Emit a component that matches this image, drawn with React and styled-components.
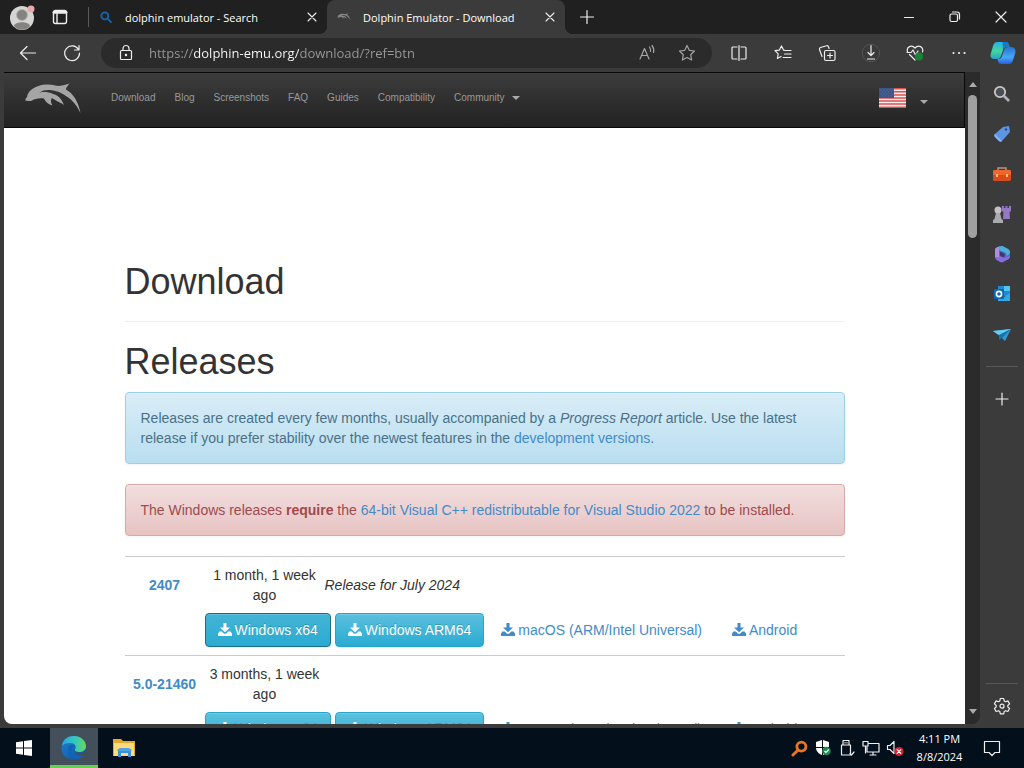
import React from 'react';
import styled, { createGlobalStyle, css } from 'styled-components';

const GlobalStyle = createGlobalStyle`
  * {
    box-sizing: border-box;
  }

  body {
    margin: 0;
    background: #3b3b3b;
    overflow: hidden;
  }

  button {
    border: 0;
    padding: 0;
    background: none;
    font: inherit;
    color: inherit;
  }

  svg {
    display: block;
    flex: none;
  }
`;

const uiFont = css`
  font-family: 'Open Sans', 'Noto Sans', sans-serif;
`;

const Desktop = styled.div`
  ${uiFont};
  height: 100vh;
  display: flex;
  flex-direction: column;
  font-size: 11px;
  color: #fff;
`;

//title bar
const TitleBar = styled.header`
  display: flex;
  align-items: center;
  height: 34px;
  flex: none;
  background: #202020;
`;

const IconButton = styled.button`
  display: flex;
  align-items: center;
  justify-content: center;
  flex: none;
  width: ${({ $width }) => $width || 44}px;
  height: 34px;
`;

const TabDivider = styled.div`
  width: 1px;
  height: 20px;
  margin-left: 12px;
  background: #5a5a5a;
`;

const Tab = styled.div`
  position: relative;
  display: flex;
  align-items: center;
  gap: 12px;
  flex: 0 1 238px;
  height: 34px;
  padding: 0 7px 0 10px;
  white-space: nowrap;

  ${({ $active }) =>
    $active &&
    css`
      background: #3b3b3b;
      border-radius: 8px 8px 0 0;

      &::before,
      &::after {
        content: '';
        position: absolute;
        bottom: 0;
        width: 8px;
        height: 8px;
      }
      &::before {
        right: 100%;
        background: radial-gradient(circle at 0 0, #202020 8px, #3b3b3b 8px);
      }
      &::after {
        left: 100%;
        background: radial-gradient(circle at 100% 0, #202020 8px, #3b3b3b 8px);
      }
    `}
`;

const TabTitle = styled.span`
  flex: 1;
`;

const WindowControls = styled.div`
  display: flex;
  margin-left: auto;
`;

//toolbar
const Toolbar = styled.div`
  display: flex;
  align-items: center;
  flex: none;
  height: 38px;
  padding-left: 6px;
`;

const AddressBar = styled.label`
  display: flex;
  align-items: center;
  flex: 1;
  height: 30px;
  margin: 0 5px 0 7px;
  padding: 0 5px 0 16px;
  border-radius: 15px;
  background: #2b2b2b;
`;

const AddressInput = styled.input`
  ${uiFont};
  flex: 1;
  min-width: 0;
  height: 24px;
  margin-left: 14px;
  padding: 0;
  border: 0;
  outline: 0;
  font-size: 13px;
  color: transparent;
  background: linear-gradient(90deg, #9a9a9a 45px, #fff 45px, #fff 150px, #9a9a9a 150px);
  background-clip: text;
`;

//window body
const WindowBody = styled.div`
  display: flex;
  flex: 1;
  min-height: 0;
`;

const Viewport = styled.div`
  display: flex;
  flex: 1;
  min-width: 0;
  margin: 0 0 4px 4px;
  border-radius: 0 0 8px 8px;
  overflow: hidden;
`;

const Page = styled.div`
  flex: 1;
  min-width: 0;
  overflow: hidden;
  background: #fff;
  color: #333;
  font: 14px/20px 'Liberation Sans', Arial, sans-serif;
`;

const ScrollTrack = styled.div`
  display: flex;
  flex-direction: column;
  align-items: center;
  flex: none;
  width: 15px;
  padding: 10px 0;
  background: #2b2b2b;
`;

const ScrollThumb = styled.div`
  width: 9px;
  height: 143px;
  margin: 8px 0 auto;
  border-radius: 5px;
  background: #9f9f9f;
`;

const Caret = styled.span`
  display: inline-block;
  border: 4px solid transparent;
  border-width: ${({ $up }) => ($up ? '0 4px 5px' : '4px 4px 0')};
  border-top-color: #aaa;
  border-bottom-color: #aaa;
`;

const ScrollDown = styled(Caret)`
  border-width: 5px 4px 0;
`;

const SideBar = styled.aside`
  display: flex;
  flex-direction: column;
  align-items: center;
  flex: none;
  width: 44px;
  padding: 2px 0 5px;
`;

const SideButton = styled.button`
  display: flex;
  align-items: center;
  justify-content: center;
  width: 40px;
  height: ${({ $height }) => $height || 40}px;
`;

const SideRule = styled.div`
  width: 32px;
  height: 1px;
  margin: ${({ $bottom }) => ($bottom ? 'auto 0 5px' : '12px 0')};
  background: #575757;
`;

//site
const SiteNav = styled.nav`
  display: flex;
  align-items: center;
  height: 56px;
  padding: 0 36px 4px 20px;
  border: 1px solid #080808;
  border-left: 0;
  background: linear-gradient(#3c3c3c, #222);
  font-size: 10px;
`;

const Brand = styled.a`
  margin-right: 20px;
`;

const NavLink = styled.a`
  display: flex;
  align-items: center;
  gap: 7px;
  padding: 0 10px 0 9px;
  color: #999;
  text-decoration: none;
`;

const LanguageButton = styled.button`
  display: flex;
  align-items: center;
  gap: 14px;
  margin-left: auto;

  span {
    margin-top: 8px;
  }
`;

const Container = styled.main`
  max-width: 750px;
  margin: 0 auto;
  padding: 134px 15px 0;
`;

const Title = styled.h1`
  margin: 0 0 10px;
  font-size: 36px;
  line-height: 40px;
  font-weight: 400;
`;

const PageHeader = styled.div`
  padding-bottom: 9px;
  margin-bottom: 20px;
  border-bottom: 1px solid #eee;
`;

const Alert = styled.p`
  margin: 0 0 20px;
  padding: 15px;
  border: 1px solid ${({ $danger }) => ($danger ? '#dca7a7' : '#9acfea')};
  border-radius: 4px;
  color: ${({ $danger }) => ($danger ? '#a04a4e' : '#4a7188')};
  background: ${({ $danger }) =>
    $danger ? 'linear-gradient(#f2dede, #e7c3c3)' : 'linear-gradient(#d9edf7, #b9def0)'};
  box-shadow: inset 0 1px 0 rgba(255, 255, 255, 0.25), 0 1px 2px rgba(0, 0, 0, 0.05);
`;

const TextLink = styled.a`
  color: #428bca;
  text-decoration: none;
`;

const Releases = styled.table`
  width: 100%;
  table-layout: fixed;
  border-spacing: 0;
`;

const VersionCol = styled.col`
  width: 80px;
`;

const DateCol = styled.col`
  width: 120px;
`;

const InfoCell = styled.td`
  padding: 8px 0;
  border-top: 1px solid #ccc;
  text-align: ${({ $left }) => ($left ? 'left' : 'center')};
`;

const VersionCell = styled(InfoCell)`
  font-weight: bold;
`;

const LinksCell = styled.td`
  padding: 0 0 8px;
`;

const Links = styled.div`
  display: flex;
  gap: 4px;
`;

const DownloadLink = styled.a`
  display: flex;
  align-items: center;
  gap: 3px;
  padding: 6px 12px;
  border: 1px solid transparent;
  border-radius: 4px;
  color: #428bca;
  text-decoration: none;
  white-space: nowrap;

  ${({ $button }) =>
    $button &&
    css`
      color: #fff;
      border-color: ${$button === 'focus' ? '#1b6d85' : '#28a4c9'};
      background: ${$button === 'focus'
        ? 'linear-gradient(#44b4d5, #2aabd2)'
        : 'linear-gradient(#5bc0de, #2aabd2)'};
      text-shadow: 0 -1px 0 rgba(0, 0, 0, 0.2);
      box-shadow: inset 0 1px 0 rgba(255, 255, 255, 0.15), 0 1px 1px rgba(0, 0, 0, 0.08);
    `}
`;

//taskbar
const Taskbar = styled.footer`
  display: flex;
  align-items: stretch;
  flex: none;
  gap: 2px;
  height: 40px;
  background: #03101c;
`;

const TaskButton = styled.button`
  display: flex;
  align-items: center;
  justify-content: center;
  width: 48px;
  border-bottom: 3px solid transparent;
  border-top: 3px solid transparent;

  ${({ $active }) =>
    $active &&
    css`
      background: #43505c;
      border-top-color: #43505c;
      border-bottom-color: #5fd44c;
    `}
`;

const Tray = styled.div`
  display: flex;
  align-items: center;
  margin-left: auto;
`;

const TrayButton = styled.button`
  display: flex;
  justify-content: center;
  width: 24px;
`;

const Clock = styled.button`
  width: 65px;
  line-height: 18px;
  text-align: center;
`;

const Notifications = styled.button`
  display: flex;
  justify-content: center;
  width: 40px;
  margin-right: 12px;
`;

const Line = ({ size = 18, width = 1.2, color = '#eee', children }) => (
  <svg
    width={size}
    height={size}
    viewBox="0 0 18 18"
    fill="none"
    stroke={color}
    strokeWidth={width}
    strokeLinecap="round"
    strokeLinejoin="round"
  >
    {children}
  </svg>
);

const CloseIcon = () => (
  <Line size={16}>
    <path d="M4.500 4.500l9 9M13.500 4.500l-9 9" />
  </Line>
);

const Dolphin = ({ width = 58, height = 32, color = '#a5a5a5' }) => (
  <svg width={width} height={height} viewBox="0 0 58 32" fill={color}>
    <path d="M1.200 18.500C1.500 17 2 16 3 15 3.500 12 5 9.500 7 8 11 4.500 17 2.500 24 2.500c5 0 8 1.300 11 1.500 4-.3 7-1.500 10.500-2.500-2 2.500-3.500 4-3.500 6 7 4 12 11 14.500 23.500-4-8-8-12.500-13-16C38 11 32 8.300 26 8c-4-.2-8 .5-10.500 2.500C20 9.500 25 10 29 12c5 1 8.500 4.500 11 11-3-2.500-6-3-8-4.500l-4-2.500c-1.500 2-1.500 4 .5 7.500-4-1-7-3.500-8.500-7-5-.8-9 .2-12 2-2 .8-5 .5-6.800 0z" />
  </svg>
);

const ProfileIcon = () => (
  <svg width="26" height="26" viewBox="0 0 26 26">
    <circle cx="13" cy="14" r="12" fill="#d5d5d3" />
    <path d="M5 22c1-5 15-5 16 0-4 5-12 5-16 0z" fill="#85837f" />
    <circle cx="13" cy="11" r="5.500" fill="#85837f" stroke="#b5b5b3" />
    <circle cx="22" cy="5" r="3.500" fill="#eda8ac" />
  </svg>
);

const DownloadGlyph = () => (
  <svg width="14" height="14" viewBox="0 0 14 14" fill="currentColor">
    <path d="M5.500 0h3v4.500H12L7 9.300 2 4.500h3.500zM1.500 8.500h2.300L6 10.700h2l2.200-2.200h2.300L14 10.500V13H0v-2.500z" />
  </svg>
);

const Flag = () => (
  <svg width="27" height="20" viewBox="0 0 27 20">
    <path fill="#f4eeee" d="M0 0h27v20H0z" />
    <path
      stroke="#dc5050"
      strokeWidth="1.500"
      d="M0 .8h27M0 3.850h27M0 6.900h27M0 9.950h27M0 13h27M0 16.100h27M0 19.200h27"
    />
    <path fill="#3c5687" d="M0 0h15v10H0z" />
    <path
      stroke="#5f75a0"
      strokeWidth=".8"
      strokeDasharray="1 2"
      d="M1.500 2h13M3 4h11M1.500 6h13M3 8h11"
    />
  </svg>
);

const Copilot = () => (
  <svg width="26" height="24" viewBox="0 0 26 24">
    <defs>
      <linearGradient id="copilotLeft" x2="0" y2="1">
        <stop stopColor="#22b5ee" />
        <stop offset=".55" stopColor="#43d69b" />
        <stop offset="1" stopColor="#2ba1ca" />
      </linearGradient>
      <linearGradient id="copilotRight" x2="0" y2="1">
        <stop stopColor="#2475d1" />
        <stop offset=".6" stopColor="#48a7f8" />
        <stop offset="1" stopColor="#2a5fdd" />
      </linearGradient>
    </defs>
    <path
      d="M8 1h8c2 0 3 2 3.500 5h-3c-2 0-3 1-3.500 3l-2 6c-.6 2-2 3-4 3H4c-3 0-4-3-3.300-5L3 5c.7-2.500 2-4 5-4z"
      fill="url(#copilotLeft)"
    />
    <path
      d="M18 6h3c4 0 5 3 4.300 6L23 19c-.8 3-2 4-5 4h-6c-3 0-4-2-4.500-5 3 0 4-1 4.500-3l2-6c.5-2 1.500-3 4-3z"
      fill="url(#copilotRight)"
    />
    <path d="M12.500 1H16c2 0 3 2 3.500 5h-3c-2 0-3 1-3.500 3z" fill="#1762bb" opacity=".75" />
  </svg>
);

const EdgeLogo = () => (
  <svg width="26" height="26" viewBox="0 0 26 26">
    <defs>
      <linearGradient id="edgeTop" x1="0" x2="1">
        <stop stopColor="#28a8dd" />
        <stop offset=".55" stopColor="#35c8bd" />
        <stop offset="1" stopColor="#67d95b" />
      </linearGradient>
      <linearGradient id="edgeBottom" x2="1" y2="1">
        <stop stopColor="#1b83d3" />
        <stop offset="1" stopColor="#11509b" />
      </linearGradient>
    </defs>
    <circle cx="12.500" cy="13" r="12" fill="url(#edgeBottom)" />
    <path
      d="M1 11C2 4 7 1 13 1c7 0 12 5 12 10 0 4-3 6-7 6-3 0-4.500-1-4-2.500 2-3 0-6.500-5-6.500-4 0-7 1-8 3z"
      fill="url(#edgeTop)"
    />
    <path d="M9 10c-4 3-2 13 6 14 4-.5 6-2 8-4-6 2-12-1-12-5 0-2 1-4 2-5z" fill="#1463b3" />
    <path d="M14 16c2 2 7 3 11 0-1 2-2 3-3 4-3 1-7 0-8-4z" fill="#43505c" />
  </svg>
);

const FolderIcon = () => (
  <svg width="22" height="18" viewBox="0 0 22 18">
    <path d="M0 0h8l2 2h12v15H0z" fill="#e6a830" />
    <path d="M1 4h20v13H1z" fill="#fbdc79" />
    <path d="M5 10h13v8h-3v-4H8v4H5z" fill="#3c8fd9" />
    <path d="M4 11l3-2h9l3 2-1 1H5z" fill="#4ea3e4" />
  </svg>
);

const sideIcons = [
  {
    label: 'Search',
    icon: (
      <svg width="18" height="18" viewBox="0 0 18 18" fill="none">
        <circle cx="7" cy="7" r="5.200" fill="#4b5054" stroke="#c8c8c8" strokeWidth="1.800" />
        <path d="M11 11l5 5" stroke="#b9aebd" strokeWidth="2.600" />
      </svg>
    ),
  },
  {
    label: 'Shopping',
    icon: (
      <svg width="18" height="18" viewBox="0 0 18 18">
        <path d="M10 2l6-1 1 6-8 9c-1 1-2 1-3 0l-4-4c-1-1-1-2 0-3z" fill="#5d95e6" />
        <path d="M2 9l7 7c-1 1-2 1-3 0l-4-4c-1-1-1-2 0-3z" fill="#83b5f4" />
        <circle cx="13" cy="4.500" r="1.200" fill="#244e91" />
      </svg>
    ),
  },
  {
    label: 'Tools',
    icon: (
      <svg width="18" height="16" viewBox="0 0 18 16">
        <path d="M5 5V2h8v3" fill="none" stroke="#b49883" strokeWidth="1.500" />
        <rect y="4" width="18" height="11" rx="1.500" fill="#d84b1d" />
        <path d="M0 6c0-1 .5-2 1.500-2h15C17.500 4 18 5 18 6v3H0z" fill="#ef672f" />
        <path d="M3 8h2v3H3zM13 8h2v3h-2z" fill="#f7bd76" />
      </svg>
    ),
  },
  {
    label: 'Games',
    icon: (
      <svg width="20" height="18" viewBox="0 0 20 18">
        <path d="M10 1h2v2h1.500V1h2v2H17V1h2v5l-1.500 1 .5 7h-7l.5-7L10 6z" fill="#9578c6" />
        <circle cx="6" cy="5" r="3.500" fill="#c2c2c6" />
        <path d="M4 8h4l1.500 6 1.500 1v3H1v-3l1.500-1z" fill="#a9a9ae" />
      </svg>
    ),
  },
  {
    label: 'Microsoft 365',
    icon: (
      <svg width="18" height="18" viewBox="0 0 18 18">
        <path d="M9 .8l6 3.200c1.500 1 2 2 2 4v4l-8 5-7-4V5c0-1 0-1.500 1-2z" fill="#5e65d3" />
        <path d="M7 1.500L9 .8l6 3.200c1.500 1 2 2 2 4l-3 3-1-3-7-3z" fill="#47b3d5" />
        <path d="M2 12l5-1 4 2 6-2c0 2-1 3-2 3.500l-5 2.500c-1 .5-2 .5-3 0l-4-2.500z" fill="#8a6ddd" />
        <path d="M2 12V5c0-1 .5-2 1.500-2.500L7 1l-1 4v7z" fill="#b08ae8" />
        <path d="M7 6.500l5 2.500-1 3.500L7 11z" fill="#3b3b66" />
      </svg>
    ),
  },
  {
    label: 'Outlook',
    icon: (
      <svg width="18" height="18" viewBox="0 0 18 18">
        <path d="M5 1h12v10H5z" fill="#2385d3" />
        <path d="M11 1h6v5h-6z" fill="#50c5ef" />
        <path d="M5 8l6 4 6-4v8H5z" fill="#31a8e4" />
        <rect x="1" y="4" width="10" height="10" rx="1" fill="#0967b8" />
        <circle cx="6" cy="9" r="2.600" fill="none" stroke="#fff" strokeWidth="1.600" />
      </svg>
    ),
  },
  {
    label: 'Drop',
    icon: (
      <svg width="18" height="18" viewBox="0 0 18 18">
        <path d="M0 6l18-2-6 12-4-4z" fill="#2d9bd7" />
        <path d="M0 6l18-2L6 10z" fill="#6accf1" />
        <path d="M6 10l12-6-9 9-3 2z" fill="#1673ab" />
      </svg>
    ),
  },
];

const navItems = ['Download', 'Blog', 'Screenshots', 'FAQ', 'Guides', 'Compatibility'];

const releases = [
  { version: '2407', date: '1 month, 1 week ago', note: 'Release for July 2024', first: 'focus' },
  { version: '5.0-21460', date: '3 months, 1 week ago', note: '', first: 'plain' },
];

const BrowserTabs = () => (
  <TitleBar>
    <IconButton aria-label="Profile">
      <ProfileIcon />
    </IconButton>
    <IconButton $width={32} aria-label="Tab actions">
      <Line width={1.4}>
        <rect x="2.500" y="2.500" width="13" height="13" rx="2" />
        <path d="M3 4.300h12" strokeWidth="2.800" />
        <path d="M6 6v9" />
      </Line>
    </IconButton>
    <TabDivider />
    <Tab>
      <Line size={14} width={2.4} color="#1767ab">
        <circle cx="7.500" cy="7.500" r="4.500" />
        <path d="M11 11l4.500 4.500" />
      </Line>
      <TabTitle>dolphin emulator - Search</TabTitle>
      <button aria-label="Close tab">
        <CloseIcon />
      </button>
    </Tab>
    <Tab $active>
      <Dolphin width={14} height={8} color="#858585" />
      <TabTitle>Dolphin Emulator - Download</TabTitle>
      <button aria-label="Close tab">
        <CloseIcon />
      </button>
    </Tab>
    <IconButton aria-label="New tab">
      <Line>
        <path d="M9 2.500v13M2.500 9h13" />
      </Line>
    </IconButton>
    <WindowControls>
      <IconButton $width={46} aria-label="Minimize">
        <Line>
          <path d="M4.500 9.500h9" />
        </Line>
      </IconButton>
      <IconButton $width={46} aria-label="Restore">
        <Line>
          <rect x="4" y="6" width="7.500" height="7.500" rx="1.500" />
          <path d="M6.500 4h4.500q2.500 0 2.500 2.500V11" />
        </Line>
      </IconButton>
      <IconButton $width={46} aria-label="Close">
        <Line>
          <path d="M4 4l10 10M14 4L4 14" />
        </Line>
      </IconButton>
    </WindowControls>
  </TitleBar>
);

const BrowserToolbar = () => (
  <Toolbar>
    <IconButton aria-label="Back">
      <Line>
        <path d="M16.500 9H1.500M8 2.500L1.500 9 8 15.500" />
      </Line>
    </IconButton>
    <IconButton aria-label="Refresh">
      <Line>
        <path d="M15.500 5.500A7.400 7.400 0 1 0 16.500 9M16 1.500V6h-4.500" />
      </Line>
    </IconButton>
    <AddressBar>
      <Line>
        <rect x="3.500" y="6.500" width="11" height="9" rx="1" />
        <path d="M6 6.500V4.500a3 3 0 0 1 6 0v2" />
        <circle cx="9" cy="11" r=".6" fill="#eee" />
      </Line>
      <AddressInput
        type="text"
        aria-label="Address"
        defaultValue="https://dolphin-emu.org/download/?ref=btn"
      />
      <IconButton $width={40} aria-label="Read aloud">
        <Line color="#a5a5a5">
          <path d="M2 15L6.500 4.500 11 15M3.500 11.500h6M11.500 3q1.500 2 1 4.500M14 1.500q2.500 3 1.500 7" />
        </Line>
      </IconButton>
      <IconButton $width={40} aria-label="Add to favorites">
        <Line color="#a5a5a5">
          <path d="M9 1.500l2.300 4.800 5.200.7-3.800 3.700.9 5.300L9 13.500 4.400 16l.9-5.300L1.500 7l5.200-.7z" />
        </Line>
      </IconButton>
    </AddressBar>
    <IconButton aria-label="Split screen">
      <Line>
        <path d="M7 3H3Q2 3 2 4v10q0 1 1 1h4M11 3h4q1 0 1 1v10q0 1-1 1h-4M9 1.500v15" />
      </Line>
    </IconButton>
    <IconButton aria-label="Favorites">
      <Line>
        <path d="M11.500 6.500l-2-.4L7.500 2 5.400 6.100 1 6.700l3.200 3.200-.8 4.600 3.600-2M11.500 6.500H17M10.500 10H17M9 13.500h8" />
      </Line>
    </IconButton>
    <IconButton aria-label="Collections">
      <Line>
        <rect x="6.500" y="6.500" width="10.500" height="10" rx="1.500" />
        <path d="M12 9v5M9.500 11.500h5M4 12.500l-2.500-7Q1 4 2.500 3.500l6-1.800q1.500-.5 2 1l.6 1.800" />
      </Line>
    </IconButton>
    <IconButton aria-label="Downloads">
      <Line>
        <circle cx="9" cy="9" r="8.800" stroke="#5a5a5a" strokeWidth=".8" />
        <path d="M9 1.500v10M6 8.500l3 3 3-3M5.500 15h7" />
      </Line>
    </IconButton>
    <IconButton aria-label="Browser essentials">
      <Line>
        <path d="M1.500 8C0 3 5.500 0 9 4c3.500-4 9-1 7.500 4M3.500 10.500L9 16M1 8.500h4L7 6l2.500 5L12 7" />
        <circle cx="13" cy="12.500" r="4" fill="#168336" stroke="none" />
      </Line>
    </IconButton>
    <IconButton aria-label="Settings and more">
      <Line width={2.2}>
        <path d="M3.500 9h.01M9 9h.01M14.500 9h.01" />
      </Line>
    </IconButton>
    <IconButton $width={43} aria-label="Copilot">
      <Copilot />
    </IconButton>
  </Toolbar>
);

const BrowserSideBar = () => (
  <SideBar>
    {sideIcons.map(({ label, icon }) => (
      <SideButton key={label} aria-label={label}>
        {icon}
      </SideButton>
    ))}
    <SideRule />
    <SideButton aria-label="Customize">
      <Line>
        <path d="M9 3v12M3 9h12" />
      </Line>
    </SideButton>
    <SideRule $bottom />
    <SideButton $height={34} aria-label="Settings">
      <Line>
        <path d="M7.300 1.500h3.400l.5 2.400 1.400.8 2.300-.8 1.700 3-1.800 1.600v1.400l1.800 1.600-1.700 3-2.300-.8-1.400.8-.5 2.400H7.300l-.5-2.400-1.400-.8-2.300.8-1.700-3 1.800-1.600V8.500L1.400 6.900l1.700-3 2.300.8 1.400-.8z" />
        <circle cx="9" cy="9.200" r="2" />
      </Line>
    </SideButton>
  </SideBar>
);

const ReleaseRows = ({ version, date, note, first }) => (
  <tbody>
    <tr>
      <VersionCell>
        <TextLink href="#version">{version}</TextLink>
      </VersionCell>
      <InfoCell>{date}</InfoCell>
      <InfoCell $left>
        <em>{note}</em>
      </InfoCell>
    </tr>
    <tr>
      <LinksCell />
      <LinksCell colSpan={2}>
        <Links>
          <DownloadLink href="#x64" $button={first}>
            <DownloadGlyph />
            Windows x64
          </DownloadLink>
          <DownloadLink href="#arm64" $button="plain">
            <DownloadGlyph />
            Windows ARM64
          </DownloadLink>
          <DownloadLink href="#macos">
            <DownloadGlyph />
            macOS (ARM/Intel Universal)
          </DownloadLink>
          <DownloadLink href="#android">
            <DownloadGlyph />
            Android
          </DownloadLink>
        </Links>
      </LinksCell>
    </tr>
  </tbody>
);

const DownloadPage = () => (
  <Page>
    <SiteNav>
      <Brand href="#home" aria-label="Dolphin Emulator">
        <Dolphin />
      </Brand>
      {navItems.map(item => (
        <NavLink key={item} href="#nav">
          {item}
        </NavLink>
      ))}
      <NavLink href="#community">
        Community <Caret />
      </NavLink>
      <LanguageButton aria-label="Language">
        <Flag />
        <Caret />
      </LanguageButton>
    </SiteNav>
    <Container>
      <PageHeader>
        <Title>Download</Title>
      </PageHeader>
      <Title>Releases</Title>
      <Alert>
        Releases are created every few months, usually accompanied by a <em>Progress Report</em>{' '}
        article. Use the latest release if you prefer stability over the newest features in the{' '}
        <TextLink href="#dev">development versions</TextLink>.
      </Alert>
      <Alert $danger>
        The Windows releases <b>require</b> the{' '}
        <TextLink href="#redist">
          64-bit Visual C++ redistributable for Visual Studio 2022
        </TextLink>{' '}
        to be installed.
      </Alert>
      <Releases>
        <colgroup>
          <VersionCol />
          <DateCol />
          <col />
        </colgroup>
        {releases.map(release => (
          <ReleaseRows key={release.version} {...release} />
        ))}
      </Releases>
    </Container>
  </Page>
);

const SystemTaskbar = () => (
  <Taskbar>
    <TaskButton aria-label="Start">
      <svg width="16" height="16" viewBox="0 0 16 16" fill="#fff">
        <path d="M0 2.200l7-1v6.300H0zM8 1l8-1v7.500H8zM0 8.500h7v6.300l-7-1zM8 8.500h8V16l-8-1z" />
      </svg>
    </TaskButton>
    <TaskButton $active aria-label="Microsoft Edge">
      <EdgeLogo />
    </TaskButton>
    <TaskButton aria-label="File Explorer">
      <FolderIcon />
    </TaskButton>
    <Tray>
      <TrayButton aria-label="Search tool">
        <Line size={17} width={3} color="#e8771f">
          <circle cx="11" cy="7" r="4.800" />
          <path d="M7 11l-5 5" />
        </Line>
      </TrayButton>
      <TrayButton aria-label="Windows Security">
        <svg width="16" height="16" viewBox="0 0 16 16">
          <path d="M7 0L1 2v5h6zM8 0l6 2v5H8zM1 8h6v7C4 14 1 11 1 8zM8 8h6c0 3-3 6-6 7z" fill="#fff" />
          <circle cx="11.500" cy="11" r="4.300" fill="#1f8a56" />
          <path d="M9.500 11l1.500 1.500 2.800-3" fill="none" stroke="#fff" strokeWidth="1.200" />
        </svg>
      </TrayButton>
      <TrayButton aria-label="Safely remove hardware">
        <Line>
          <path d="M5 6V1.500h6V6M3.500 6h9v10h-9zM7 3.500v.5M9 3.500v.5M12 14.500l1.500 1.500 2.500-3" />
        </Line>
      </TrayButton>
      <TrayButton aria-label="Network">
        <Line>
          <path d="M7 4.500h10V13H5V8M11 13v3M8 16h6M1 2.500h5V7H1zM3.500 7v7" />
        </Line>
      </TrayButton>
      <TrayButton aria-label="Volume muted">
        <Line>
          <path d="M1.500 6.500h2.500L8 2.500v12l-4-4H1.500z" />
          <circle cx="13" cy="12.500" r="4.500" fill="#d92332" stroke="none" />
          <path d="M11.200 10.700l3.600 3.600M14.800 10.700l-3.600 3.600" stroke="#fff" />
        </Line>
      </TrayButton>
      <Clock>
        4:11 PM
        <br />
        8/8/2024
      </Clock>
      <Notifications aria-label="Notifications">
        <Line>
          <path d="M1.500 2.500h15v11H12l-3 3-3-3H1.500z" />
        </Line>
      </Notifications>
    </Tray>
  </Taskbar>
);

const App = () => (
  <>
    <GlobalStyle />
    <Desktop>
      <BrowserTabs />
      <BrowserToolbar />
      <WindowBody>
        <Viewport>
          <DownloadPage />
          <ScrollTrack>
            <Caret $up />
            <ScrollThumb />
            <ScrollDown />
          </ScrollTrack>
        </Viewport>
        <BrowserSideBar />
      </WindowBody>
      <SystemTaskbar />
    </Desktop>
  </>
);

export default App;
